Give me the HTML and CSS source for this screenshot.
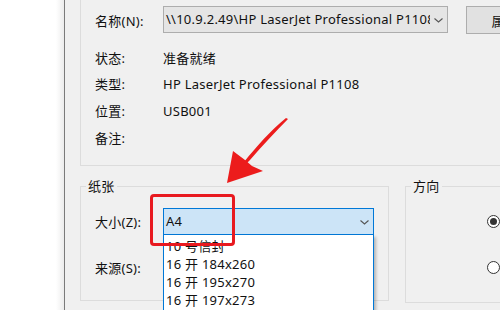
FILE: index.html
```html
<!DOCTYPE html>
<html lang="zh-CN">
<head>
<meta charset="utf-8">
<title>打印</title>
<link rel="stylesheet" href="styles.css">
</head>
<body>
<div class="screen">
  <div class="desk"></div>
  <div class="dialog">
    <div class="group printer">
      <div class="name-row">
        <span class="lbl">名称(N):</span>
        <div class="combo grey">
          <span class="ctext">\\10.9.2.49\HP LaserJet Professional P1108</span>
          <svg class="chev" width="17" height="10" viewBox="0 0 17 10"><path d="M4.5 3.5 L8.5 7 L12.5 3.5" fill="none" stroke="#555" stroke-width="1.1"/></svg>
        </div>
        <div class="btn">属性(P)</div>
      </div>
      <div class="info">
        <div class="irow r1"><span class="lbl">状态:</span><span>准备就绪</span></div>
        <div class="irow r2"><span class="lbl">类型:</span><span>HP LaserJet Professional P1108</span></div>
        <div class="irow r3"><span class="lbl">位置:</span><span>USB001</span></div>
        <div class="irow r4"><span class="lbl">备注:</span><span></span></div>
      </div>
    </div>
    <div class="lower">
      <div class="group paper">
        <span class="legend">纸张</span>
        <div class="prow size-row">
          <span class="lbl">大小(Z):</span>
          <div class="combo sel">
            <span class="ctext">A4</span>
            <svg class="chev" width="17" height="10" viewBox="0 0 17 10"><path d="M4.5 3.5 L8.5 7 L12.5 3.5" fill="none" stroke="#555" stroke-width="1.1"/></svg>
          </div>
        </div>
        <div class="prow src-row">
          <span class="lbl">来源(S):</span>
        </div>
        <ul class="dropdown">
          <li>10 号信封</li>
          <li>16 开 184x260</li>
          <li>16 开 195x270</li>
          <li>16 开 197x273</li>
          <li>A3</li>
        </ul>
        <div class="redbox"></div>
      </div>
      <div class="group dir">
        <span class="legend">方向</span>
        <div class="radios">
          <div class="radio-row first"><span class="radio on"></span><span class="rlbl">纵向(O)</span></div>
          <div class="radio-row second"><span class="radio"></span><span class="rlbl">横向(A)</span></div>
        </div>
      </div>
    </div>
  </div>
  <svg class="arrow" width="500" height="310" viewBox="0 0 500 310">
    <path d="M288 119 C 275 132, 262 146, 250 160 L 246 164 L 244 162 C 256 147, 270 131, 286 118 Z" fill="#ec1c1c"/>
    <path d="M227 183 L 233 151 L 245 160 L 252 166 L 263 171 Z" fill="#ec1c1c"/>
  </svg>
</div>
</body>
</html>
```
FILE: styles.css
```css
html, body {
  margin: 0;
  padding: 0;
  background: #ffffff;
}
body {
  font-family: "Noto Sans", "Noto Sans CJK SC", sans-serif;
  font-size: 13px;
  letter-spacing: 0.25px;
  color: #111111;
}
.screen {
  width: 500px;
  height: 310px;
  overflow: hidden;
  display: flex;
  position: relative;
}
.desk {
  flex: none;
  width: 64px;
  height: 310px;
  background: linear-gradient(to right, #ffffff 0, #ffffff 56px, #ececec 64px);
}
.dialog {
  flex: none;
  width: 700px;
  height: 310px;
  background: #f0f0f0;
  border-left: 1px solid #7a7a7a;
  padding-left: 15px;
  box-sizing: border-box;
  display: flex;
  flex-direction: column;
}
.group {
  border: 1px solid #dcdcdc;
  box-sizing: border-box;
  position: relative;
  display: flex;
  flex-direction: column;
  flex: none;
}
.printer {
  border-top: none;
  width: 560px;
  height: 166px;
  padding-left: 14px;
  padding-top: 6px;
}
.name-row {
  display: flex;
  align-items: center;
  height: 28px;
}
.lbl {
  flex: none;
  width: 68px;
  white-space: nowrap;
}
.combo {
  display: flex;
  align-items: center;
  box-sizing: border-box;
  height: 27px;
  border: 1px solid #adadad;
}
.combo .ctext {
  flex: 1;
  overflow: hidden;
  white-space: nowrap;
  padding-left: 2px;
  line-height: 25px;
}
.combo .chev {
  flex: none;
}
.grey {
  width: 285px;
  background: #e5e5e5;
  align-self: flex-start;
}
.btn {
  flex: none;
  margin-left: 18px;
  width: 94px;
  height: 28px;
  box-sizing: border-box;
  border: 1px solid #adadad;
  background: #e1e1e1;
  display: flex;
  align-items: center;
  justify-content: center;
  white-space: nowrap;
}
.info {
  margin-top: 12px;
  display: flex;
  flex-direction: column;
}
.irow {
  display: flex;
  height: 27px;
  line-height: 27px;
}
.irow.r1 { height: 25px; line-height: 25px; }
.lower {
  display: flex;
  margin-top: 20px;
  gap: 16px;
}
.paper {
  width: 309px;
  height: 115px;
  padding-left: 14px;
}
.legend {
  display: block;
  align-self: flex-start;
  background: #f0f0f0;
  line-height: 16px;
  height: 16px;
  margin-top: -9px;
  margin-left: -9px;
  padding: 0 2px;
}
.dir .legend {
  margin-left: -2px;
}
.prow {
  display: flex;
  align-items: center;
  height: 27px;
}
.size-row {
  margin-top: 14px;
}
.src-row {
  margin-top: 19px;
}
.sel {
  width: 211px;
  background: #cce4f7;
  border-color: #0078d7;
}
.dropdown {
  position: absolute;
  left: 82px;
  top: 48px;
  width: 211px;
  height: 120px;
  margin: 0;
  padding: 0;
  list-style: none;
  box-sizing: border-box;
  background: #ffffff;
  border: 1px solid #0078d7;
  border-top: none;
  box-shadow: 2px 2px 3px rgba(0, 0, 0, 0.25);
}
.dropdown li {
  line-height: 18px;
  height: 18px;
  padding-left: 2px;
  white-space: nowrap;
}
.dropdown li:first-child {
  margin-top: 2px;
}
.redbox {
  position: absolute;
  left: 69px;
  top: 7px;
  width: 85px;
  height: 52px;
  box-sizing: border-box;
  border: 3px solid #e8191f;
  border-radius: 4px;
}
.dir {
  width: 200px;
  height: 117px;
  padding-left: 7px;
}
.radios {
  display: flex;
  flex-direction: column;
  padding-left: 74px;
}
.radio-row {
  display: flex;
  align-items: center;
  gap: 6px;
  height: 16px;
}
.radio-row.first {
  margin-top: 19px;
}
.radio-row.second {
  margin-top: 30px;
}
.radio {
  flex: none;
  width: 13px;
  height: 13px;
  box-sizing: border-box;
  border: 1px solid #333333;
  border-radius: 50%;
  background: #ffffff;
  display: flex;
  align-items: center;
  justify-content: center;
}
.radio.on::after {
  content: "";
  width: 7px;
  height: 7px;
  border-radius: 50%;
  background: #333333;
}
.rlbl {
  white-space: nowrap;
}
.arrow {
  position: absolute;
  left: 0;
  top: 0;
  pointer-events: none;
}
```
